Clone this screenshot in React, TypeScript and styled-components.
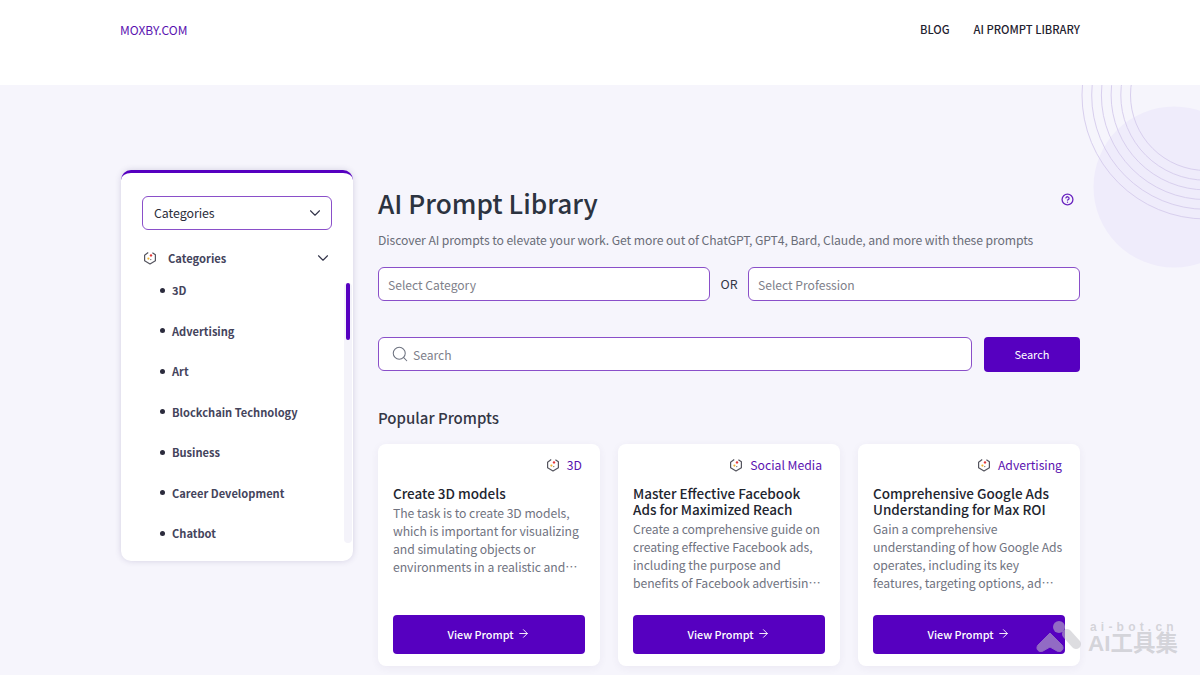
import React from 'react';
import styled, { createGlobalStyle } from 'styled-components';
import { ChevronDown, Search as SearchIcon, ArrowRight, CircleHelp } from 'lucide-react';

const GlobalStyle = createGlobalStyle`
  html, body {
    margin: 0;
    padding: 0;
    height: 675px;
    overflow: hidden;
    background: #f6f5fc;
    font-family: "Noto Sans CJK SC", "Noto Sans", sans-serif;
  }
  * { box-sizing: border-box; }
`;

const Page = styled.div`
  position: relative;
  width: 1200px;
  height: 675px;
  overflow: hidden;
`;

const Header = styled.header`
  height: 85px;
  background: #fff;
  padding: 0 120px 0 120px;
  display: flex;
  justify-content: space-between;
  align-items: flex-start;
`;

const Logo = styled.a`
  margin-top: 20px;
  font-size: 12px;
  line-height: 19px;
  color: #5a12b0;
`;

const NavLinks = styled.nav`
  margin-top: 20px;
  display: flex;
  gap: 24px;
`;

const NavItem = styled.a`
  font-size: 11.2px;
  line-height: 19px;
  font-weight: 500;
  color: #1f2230;
`;

const Decoration = styled.svg`
  position: absolute;
  top: 85px;
  right: 0;
`;

const Content = styled.div`
  position: relative;
  display: flex;
  gap: 25px;
  padding: 85px 120px 0 121px;
`;

const Sidebar = styled.aside`
  width: 232px;
  height: 391px;
  flex-shrink: 0;
  position: relative;
  overflow: hidden;
  background: #fff;
  border-top: 3px solid #5600c0;
  border-radius: 10px;
  box-shadow: 0 0 6px rgba(60, 50, 110, 0.18);
  padding: 23px 21px 0;
`;

const SelectBox = styled.div`
  height: 34px;
  width: 190px;
  display: flex;
  align-items: center;
  justify-content: space-between;
  padding: 0 7px 0 11px;
  background: #fff;
  border: 1px solid #8a4fc9;
  border-radius: 6px;
  font-size: 12.4px;
  letter-spacing: -0.05px;
  color: #2b2d3a;
`;

const CategoryHead = styled.div`
  display: flex;
  align-items: center;
  width: 190px;
  margin-top: 18px;
  height: 20px;
  padding-left: 1px;
  font-size: 11.2px;
  font-weight: 700;
  color: #44445c;
`;

const CategoryLabel = styled.span`
  margin-left: 11px;
  flex: 1;
`;

const CategoryList = styled.ul`
  list-style: none;
  margin: 12px 0 0;
  padding: 0 0 0 18px;
`;

const CategoryItem = styled.li`
  display: flex;
  align-items: center;
  gap: 7px;
  height: 20px;
  margin-bottom: 20.5px;
  font-size: 11.1px;
  font-weight: 700;
  color: #44445c;
  &::before {
    content: '';
    width: 5px;
    height: 5px;
    border-radius: 50%;
    background: #2b2b3d;
  }
`;

const ScrollTrack = styled.div`
  position: absolute;
  top: 110px;
  right: 1px;
  width: 8px;
  height: 260px;
  background: #f4f3fa;
  border-radius: 4px;
`;

const ScrollThumb = styled.div`
  width: 4px;
  height: 57px;
  margin-left: 2px;
  background: #5600c0;
  border-radius: 2px;
`;

const Main = styled.main`
  width: 702px;
`;

const TitleRow = styled.div`
  display: flex;
  justify-content: space-between;
  align-items: flex-start;
  padding-top: 15px;
  height: 55px;
`;

const Title = styled.h1`
  margin: 0;
  font-size: 26.2px;
  line-height: 37px;
  font-weight: 500;
  color: #2c3340;
`;

const HelpWrap = styled.span`
  display: block;
  margin: 8px 6px 0 0;
  color: #6a25c0;
  line-height: 0;
`;

const Description = styled.p`
  margin: 5px 0 0;
  font-size: 12.2px;
  letter-spacing: -0.09px;
  line-height: 20px;
  white-space: nowrap;
  color: #6a6d78;
`;

const FilterRow = styled.div`
  display: flex;
  align-items: center;
  margin-top: 17px;
`;

const OrLabel = styled.span`
  width: 38px;
  text-align: center;
  font-size: 12.4px;
  color: #333645;
`;

const Field = styled.div<{ $width: number }>`
  width: ${p => p.$width}px;
  height: 34px;
  display: flex;
  align-items: center;
  padding: 0 9px;
  background: #fff;
  border: 1px solid #8a4fc9;
  border-radius: 6px;
  font-size: 12.1px;
  color: #7e808a;
`;

const SearchRow = styled.div`
  display: flex;
  justify-content: space-between;
  margin-top: 36px;
`;

const SearchText = styled.span`
  margin-left: 4px;
`;

const SearchButton = styled.button`
  width: 96px;
  height: 35px;
  padding: 0 0 2px;
  background: #5600c0;
  border: 0;
  border-radius: 4px;
  color: #fff;
  font-family: inherit;
  font-size: 11px;
`;

const SectionTitle = styled.h2`
  margin: 34px 0 0;
  font-size: 15px;
  line-height: 23px;
  font-weight: 500;
  color: #333645;
`;

const CardGrid = styled.div`
  display: grid;
  grid-template-columns: repeat(3, 222px);
  gap: 18px;
  margin-top: 15px;
`;

const Card = styled.article`
  height: 222px;
  display: flex;
  flex-direction: column;
  padding: 11px 15px 12px;
  background: #fff;
  border-radius: 8px;
  box-shadow: 0 2px 8px rgba(60, 50, 110, 0.06);
`;

const Badge = styled.div`
  display: flex;
  justify-content: flex-end;
  align-items: center;
  gap: 7px;
  height: 20px;
  padding-right: 3px;
  font-size: 12.2px;
  color: #5a12b0;
`;

const CardTitle = styled.h3`
  margin: 10px 0 0;
  font-size: 13.5px;
  line-height: 16px;
  font-weight: 500;
  color: #22252f;
`;

const CardText = styled.p`
  margin: 3px 0 0;
  font-size: 12.2px;
  letter-spacing: -0.05px;
  line-height: 18px;
  color: #70737f;
  display: -webkit-box;
  -webkit-line-clamp: 4;
  -webkit-box-orient: vertical;
  overflow: hidden;
`;

const ViewButton = styled.button`
  margin-top: auto;
  height: 39px;
  display: flex;
  align-items: center;
  justify-content: center;
  gap: 4px;
  padding: 0 0 2px;
  background: #5600c0;
  border: 0;
  border-radius: 4px;
  color: #fff;
  font-family: inherit;
  font-size: 10.8px;
  font-weight: 500;
`;

const Watermark = styled.div`
  position: absolute;
  left: 1036px;
  top: 620px;
  display: flex;
  pointer-events: none;
`;

const WatermarkText = styled.div`
  margin-left: 6px;
  color: rgba(190, 190, 195, 0.62);
  font-family: "Liberation Sans", "Noto Sans CJK SC", sans-serif;
  font-weight: 700;
`;

const WatermarkUrl = styled.div`
  font-size: 12px;
  line-height: 14px;
  letter-spacing: 4.2px;
  margin-left: 2px;
`;

const WatermarkName = styled.div`
  font-size: 22.5px;
  line-height: 20px;
`;

// small hexagon mark used next to categories
function HexMark() {
  return (
    <svg width="14" height="14" viewBox="0 0 14 14" fill="none">
      <path d="M9.4 1.7 12.4 3.8V9.8L7 13 1.6 9.8V4.2L5.2 1.6" stroke="#55555f" strokeWidth="1.2" strokeLinejoin="round" />
      <circle cx="8" cy="4.4" r="1.2" fill="#e23a3a" />
      <circle cx="5.4" cy="7.6" r="1.1" fill="#f2b632" />
      <circle cx="7.8" cy="8.6" r="0.6" fill="#55555f" />
    </svg>
  );
}

const categories = ['3D', 'Advertising', 'Art', 'Blockchain Technology', 'Business', 'Career Development', 'Chatbot'];

const prompts = [
  {
    tag: '3D',
    title: 'Create 3D models',
    text: 'The task is to create 3D models, which is important for visualizing and simulating objects or environments in a realistic and accurate way for many uses',
  },
  {
    tag: 'Social Media',
    title: 'Master Effective Facebook Ads for Maximized Reach',
    text: 'Create a comprehensive guide on creating effective Facebook ads, including the purpose and benefits of Facebook advertising for any business',
  },
  {
    tag: 'Advertising',
    title: 'Comprehensive Google Ads Understanding for Max ROI',
    text: 'Gain a comprehensive understanding of how Google Ads operates, including its key features, targeting options, ad formats and bidding methods',
  },
];

const rings = [75.5, 85.2, 94.9, 104.6, 114.3, 124];

export default function App() {
  return (
    <Page>
      <GlobalStyle />
      <Header>
        <Logo>MOXBY.COM</Logo>
        <NavLinks>
          <NavItem>BLOG</NavItem>
          <NavItem>AI PROMPT LIBRARY</NavItem>
        </NavLinks>
      </Header>

      <Decoration width="120" height="190" viewBox="0 0 120 190" fill="none">
        <circle cx="94" cy="102" r="80.5" fill="#efecfb" />
        {rings.map(r => (
          <circle key={r} cx="126" cy="10" r={r} stroke="#d8cfee" strokeWidth="1" />
        ))}
      </Decoration>

      <Content>
        <Sidebar>
          <SelectBox>
            Categories
            <ChevronDown size={18} strokeWidth={1.5} color="#33354a" />
          </SelectBox>
          <CategoryHead>
            <HexMark />
            <CategoryLabel>Categories</CategoryLabel>
            <ChevronDown size={18} strokeWidth={1.5} color="#33354a" />
          </CategoryHead>
          <CategoryList>
            {categories.map(c => (
              <CategoryItem key={c}>{c}</CategoryItem>
            ))}
          </CategoryList>
          <ScrollTrack>
            <ScrollThumb />
          </ScrollTrack>
        </Sidebar>

        <Main>
          <TitleRow>
            <Title>AI Prompt Library</Title>
            <HelpWrap>
              <CircleHelp size={13} strokeWidth={2.4} />
            </HelpWrap>
          </TitleRow>
          <Description>
            Discover AI prompts to elevate your work. Get more out of ChatGPT, GPT4, Bard, Claude, and more with these prompts
          </Description>
          <FilterRow>
            <Field $width={332}>Select Category</Field>
            <OrLabel>OR</OrLabel>
            <Field $width={332}>Select Profession</Field>
          </FilterRow>
          <SearchRow>
            <Field $width={594}>
              <SearchIcon size={18} strokeWidth={1.4} color="#6e7380" style={{ marginLeft: 3 }} />
              <SearchText>Search</SearchText>
            </Field>
            <SearchButton>Search</SearchButton>
          </SearchRow>
          <SectionTitle>Popular Prompts</SectionTitle>
          <CardGrid>
            {prompts.map(p => (
              <Card key={p.title}>
                <Badge>
                  <HexMark />
                  {p.tag}
                </Badge>
                <CardTitle>{p.title}</CardTitle>
                <CardText>{p.text}</CardText>
                <ViewButton>
                  View Prompt
                  <ArrowRight size={13} strokeWidth={1.7} />
                </ViewButton>
              </Card>
            ))}
          </CardGrid>
        </Main>
      </Content>

      <Watermark>
        <svg width="46" height="34" viewBox="0 0 46 34" fill="#c3c3c8">
          <g opacity="0.55">
            <circle cx="23" cy="7" r="6" />
            <path d="M14 13 26 25C29 29 25 33 21 31L14 27 7 31C3 33-1 29 2 25Z" stroke="#c3c3c8" strokeWidth="1" strokeLinejoin="round" />
            <path d="M31 14 40 24" stroke="#c3c3c8" strokeWidth="10" strokeLinecap="round" />
          </g>
        </svg>
        <WatermarkText>
          <WatermarkUrl>ai-bot.cn</WatermarkUrl>
          <WatermarkName>AI工具集</WatermarkName>
        </WatermarkText>
      </Watermark>
    </Page>
  );
}
